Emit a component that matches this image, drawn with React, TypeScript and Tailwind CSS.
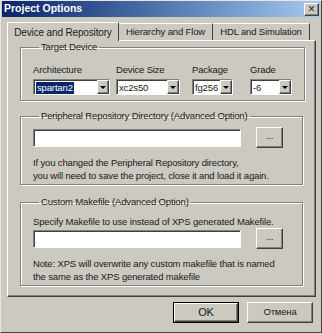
import React from "react";

const raised =
    "border border-t-white border-l-white border-r-[#404040] border-b-[#404040] shadow-[inset_-1px_-1px_0_#808080]";
const sunken =
    "border border-t-[#808080] border-l-[#808080] border-r-white border-b-white shadow-[inset_1px_1px_0_#404040]";

const Combo = ({ value, width, selected }: { value: string; width: string; selected?: boolean }) => (
    <div className={`flex h-[16px] bg-white ${sunken} ${width}`}>
        <div className="flex flex-1 items-center pl-[2px] pt-[1px]">
            <span className={selected ? "bg-[#0a246a] px-[1px] text-white leading-[12px]" : "leading-[12px]"}>{value}</span>
        </div>
        <div className={`flex w-[12px] items-center justify-center bg-[#ccc9c1] ${raised}`}>
            <span className="border-x-[3px] border-t-[3px] border-x-transparent border-t-black" />
        </div>
    </div>
);

const Group = ({ title, className, children }: { title: string; className: string; children: React.ReactNode }) => (
    <fieldset
        className={`border border-[#808080] shadow-[inset_1px_1px_0_#fff,1px_1px_0_#fff] px-[12px] ${className}`}
    >
        <legend className="ml-[6px] px-[2px] leading-[12px]">{title}</legend>
        {children}
    </fieldset>
);

const App = () => {
    return (
        <div
            className="flex h-[333px] w-[322px] flex-col whitespace-nowrap bg-[#ccc9c1] text-[9.5px] tracking-[-0.15px] text-[#1a1a1a] border border-t-[#e8e6e0] border-l-[#e8e6e0] border-r-[#404040] border-b-[#404040]"
            style={{ fontFamily: '"Liberation Sans", Arial, sans-serif' }}
        >
            {/* заголовок окна */}
            <div className="mx-[1px] flex h-[16px] items-center justify-between bg-gradient-to-r from-[#0a246a] to-[#a6caf0] pl-[2px] pr-[1px]">
                <span className="text-[10.5px] font-bold tracking-normal text-white">Project Options</span>
                <div className={`flex h-[13px] w-[15px] items-center justify-center bg-[#ccc9c1] text-[12px] leading-none ${raised}`}>
                    ×
                </div>
            </div>

            {/* вкладки */}
            <div className="mt-[5px] flex items-end pl-[6px]">
                <div className="relative z-10 -mb-px flex h-[19px] w-[112px] items-center justify-center border-t border-l border-r border-t-white border-l-white border-r-[#404040] bg-[#ccc9c1] text-[10px]">
                    Device and Repository
                </div>
                <div className="flex h-[17px] w-[94px] items-center justify-center border-t border-r border-t-white border-r-[#404040]">
                    Hierarchy and Flow
                </div>
                <div className="flex h-[17px] w-[97px] items-center justify-center border-t border-r border-t-white border-r-[#404040]">
                    HDL and Simulation
                </div>
            </div>

            {/* панель */}
            <div className="ml-[6px] flex h-[257px] w-[309px] flex-col border border-t-white border-l-white border-r-[#404040] border-b-[#404040] px-[12px] shadow-[inset_-1px_-1px_0_#808080]">
                <Group title="Target Device" className="pb-[5px]">
                    <div className="mt-[11px] flex">
                        <div className="w-[77px]">
                            <div className="mb-[3px] leading-[12px]">Architecture</div>
                            <Combo value="spartan2" width="w-[77px]" selected />
                        </div>
                        <div className="ml-[6px] w-[64px]">
                            <div className="mb-[3px] leading-[12px]">Device Size</div>
                            <Combo value="xc2s50" width="w-[64px]" />
                        </div>
                        <div className="ml-[12px] w-[41px]">
                            <div className="mb-[3px] leading-[12px]">Package</div>
                            <Combo value="fg256" width="w-[41px]" />
                        </div>
                        <div className="ml-[17px] w-[42px]">
                            <div className="mb-[3px] leading-[12px]">Grade</div>
                            <Combo value="-6" width="w-[42px]" />
                        </div>
                    </div>
                </Group>

                <Group title="Peripheral Repository Directory (Advanced Option)" className="mt-[9px] pb-[2px]">
                    <div className="mt-[5px] flex items-center">
                        <div className={`h-[18px] w-[208px] bg-white ${sunken}`} />
                        <div className={`ml-[15px] flex h-[21px] w-[27px] items-center justify-center pb-[3px] ${raised}`}>...</div>
                    </div>
                    <div className="mt-[8px] leading-[13px]">
                        If you changed the Peripheral Repository directory,
                        <br />
                        you will need to save the project, close it and load it again.
                    </div>
                </Group>

                <Group title="Custom Makefile (Advanced Option)" className="mt-[11px] pb-[2px]">
                    <div className="mt-[7px] leading-[13px]">Specify Makefile to use instead of XPS generated Makefile.</div>
                    <div className="mt-[0px] flex items-center">
                        <div className={`h-[18px] w-[208px] bg-white ${sunken}`} />
                        <div className={`ml-[15px] flex h-[21px] w-[27px] items-center justify-center pb-[3px] ${raised}`}>...</div>
                    </div>
                    <div className="mt-[8px] leading-[13px]">
                        Note: XPS will overwrite any custom makefile that is named
                        <br />
                        the same as the XPS generated makefile
                    </div>
                </Group>
            </div>

            {/* кнопки */}
            <div className="mt-[5px] flex justify-end gap-[8px] pr-[8px]">
                <div className="border border-black">
                    <div className={`flex h-[19px] w-[64px] items-center justify-center text-[11px] ${raised}`}>OK</div>
                </div>
                <div className={`flex h-[21px] w-[66px] items-center justify-center ${raised}`}>Отмена</div>
            </div>
        </div>
    );
};

export default App;
